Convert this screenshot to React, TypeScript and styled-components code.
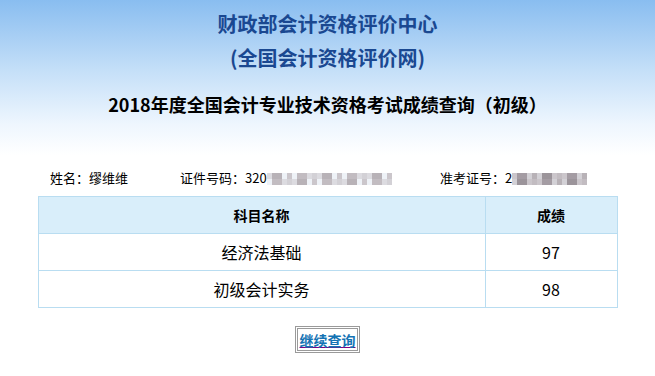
import React from 'react';
import styled, { createGlobalStyle } from 'styled-components';

const GlobalStyle = createGlobalStyle`
  body {
    margin: 0;
    background: #fff;
    font-family: 'Noto Sans CJK SC', 'Noto Sans', sans-serif;
    color: #000;
  }
`;

const Header = styled.div`
  height: 155px;
  box-sizing: border-box;
  padding-top: 7px;
  background: linear-gradient(to bottom, #89bdf0 0%, #c4dff8 45%, #eef6fe 80%, #ffffff 100%);
  text-align: center;
`;

const OrgTitle = styled.h1`
  margin: 0;
  font-size: 20px;
  line-height: 34px;
  font-weight: bold;
  color: #1a4891;
`;

const ExamTitle = styled.h2`
  margin: 16px 0 0;
  font-size: 18px;
  line-height: 26px;
  font-weight: bold;
  color: #000;
`;

const InfoRow = styled.div`
  display: flex;
  align-items: center;
  margin-top: 13px;
  padding-left: 50px;
  font-size: 13px;
  line-height: 20px;
`;

const InfoItem = styled.div<{ $w?: number }>`
  display: flex;
  align-items: center;
  width: ${(p) => (p.$w ? `${p.$w}px` : 'auto')};
`;

const Mosaic = styled.span<{ $cols: number }>`
  display: inline-grid;
  grid-template-columns: repeat(${(p) => p.$cols}, 5px);
  grid-auto-rows: 6px;
  margin-top: 1px;
`;

const Pixel = styled.span<{ $c: string }>`
  background: ${(p) => p.$c};
`;

const Table = styled.table`
  width: 580px;
  margin: 8px auto 0;
  border-collapse: collapse;
  border: 1px solid #b9ddf1;
`;

const Th = styled.th<{ $w?: number }>`
  height: 36px;
  padding: 0;
  background: #d9eefa;
  border: 1px solid #b9ddf1;
  font-size: 14px;
  font-weight: bold;
  text-align: center;
  width: ${(p) => (p.$w ? `${p.$w}px` : 'auto')};
`;

const Td = styled.td`
  height: 36px;
  padding: 0;
  border: 1px solid #b9ddf1;
  font-size: 16px;
  text-align: center;
`;

const ButtonWrap = styled.div`
  display: flex;
  justify-content: center;
  margin-top: 18px;
`;

const MoreButton = styled.a`
  display: flex;
  align-items: center;
  justify-content: center;
  box-sizing: border-box;
  width: 65px;
  height: 27px;
  border: 3px double #9a9a9a;
  color: #800080;
  text-decoration: underline;
  font-size: 14px;
  font-weight: bold;
  cursor: pointer;
  & span {
    color: #1473b4;
  }
`;

// blurred digits: pseudo-random greys, two pixel rows
const greys = ['#a49ca3', '#b8b2b7', '#cbc6cb', '#dcdbe0', '#e8eaef', '#9b949a', '#c2bcc1', '#d3d1d6', '#eef2f7', '#b0aab0'];
const makePixels = (n: number, seed: number) =>
  Array.from({ length: n }, (_, i) => greys[(i * 7 + seed * 3 + ((i * i) % 5)) % greys.length]);

const ScoreRow: React.FC<{ subject: string; score: number }> = ({ subject, score }) => (
  <tr>
    <Td>{subject}</Td>
    <Td>{score}</Td>
  </tr>
);

const Blur: React.FC<{ cols: number; seed: number }> = ({ cols, seed }) => (
  <Mosaic $cols={cols}>
    {makePixels(cols * 2, seed).map((c, i) => (
      <Pixel key={i} $c={c} />
    ))}
  </Mosaic>
);

const App: React.FC = () => {
  return (
    <>
      <GlobalStyle />
      <Header>
        <OrgTitle>
          财政部会计资格评价中心
          <br />
          (全国会计资格评价网)
        </OrgTitle>
        <ExamTitle>2018年度全国会计专业技术资格考试成绩查询（初级）</ExamTitle>
      </Header>
      <InfoRow>
        <InfoItem $w={130}>姓名：缪维维</InfoItem>
        <InfoItem $w={260}>
          证件号码：320
          <Blur cols={25} seed={1} />
        </InfoItem>
        <InfoItem>
          准考证号：2
          <Blur cols={15} seed={4} />
        </InfoItem>
      </InfoRow>
      <Table>
        <thead>
          <tr>
            <Th>科目名称</Th>
            <Th $w={131}>成绩</Th>
          </tr>
        </thead>
        <tbody>
          <ScoreRow subject="经济法基础" score={97} />
          <ScoreRow subject="初级会计实务" score={98} />
        </tbody>
      </Table>
      <ButtonWrap>
        <MoreButton>
          <span>继续查询</span>
        </MoreButton>
      </ButtonWrap>
    </>
  );
};

export default App;
